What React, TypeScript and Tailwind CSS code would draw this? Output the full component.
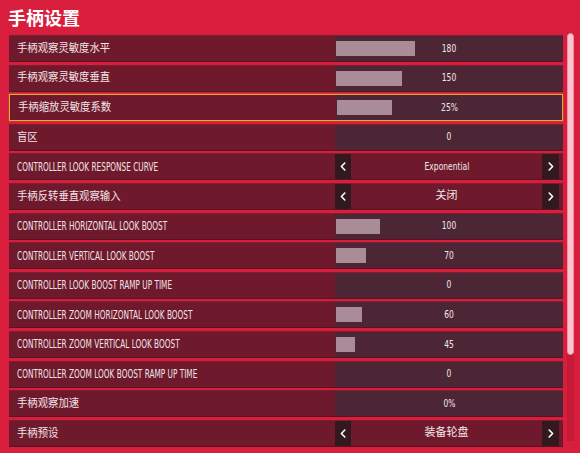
import React from 'react';

type Row = {
  label: string;
  latin?: boolean;
  kind: 'slider' | 'select';
  value: string;
  fill?: number;
  active?: boolean;
};

const rows: Row[] = [
  { label: '手柄观察灵敏度水平', kind: 'slider', value: '180', fill: 79 },
  { label: '手柄观察灵敏度垂直', kind: 'slider', value: '150', fill: 66 },
  { label: '手柄缩放灵敏度系数', kind: 'slider', value: '25%', fill: 55, active: true },
  { label: '盲区', kind: 'slider', value: '0', fill: 0 },
  { label: 'CONTROLLER LOOK RESPONSE CURVE', latin: true, kind: 'select', value: 'Exponential' },
  { label: '手柄反转垂直观察输入', kind: 'select', value: '关闭' },
  { label: 'CONTROLLER HORIZONTAL LOOK BOOST', latin: true, kind: 'slider', value: '100', fill: 44 },
  { label: 'CONTROLLER VERTICAL LOOK BOOST', latin: true, kind: 'slider', value: '70', fill: 30 },
  { label: 'CONTROLLER LOOK BOOST RAMP UP TIME', latin: true, kind: 'slider', value: '0', fill: 0 },
  { label: 'CONTROLLER ZOOM HORIZONTAL LOOK BOOST', latin: true, kind: 'slider', value: '60', fill: 26 },
  { label: 'CONTROLLER ZOOM VERTICAL LOOK BOOST', latin: true, kind: 'slider', value: '45', fill: 19 },
  { label: 'CONTROLLER ZOOM LOOK BOOST RAMP UP TIME', latin: true, kind: 'slider', value: '0', fill: 0 },
  { label: '手柄观察加速', kind: 'slider', value: '0%', fill: 0 },
  { label: '手柄预设', kind: 'select', value: '装备轮盘' },
];

const font = {
  fontFamily: '"DejaVu Sans Condensed", "DejaVu Sans", "Noto Sans CJK SC", sans-serif',
};

function Value({ text }: { text: string }) {
  const latin = /^[A-Za-z0-9%]+$/.test(text);
  return (
    <span
      className={
        latin
          ? 'relative inline-block text-[10.5px] text-[#f3e6ea] scale-x-[0.8]'
          : 'relative inline-block text-[11px] text-[#f3e6ea]'
      }
    >
      {text}
    </span>
  );
}

function Chevron({ dir }: { dir: 'left' | 'right' }) {
  return (
    <svg width="6" height="9" viewBox="0 0 6 9" fill="none">
      <path
        d={dir === 'left' ? 'M4.8 1 L1.4 4.5 L4.8 8' : 'M1.2 1 L4.6 4.5 L1.2 8'}
        stroke="#ffffff"
        strokeWidth="1.6"
        strokeLinecap="round"
        strokeLinejoin="round"
      />
    </svg>
  );
}

function SettingRow({ row }: { row: Row }) {
  return (
    <div
      className={
        row.active
          ? 'flex h-[27px] border border-[#f2a23c] bg-[#6e1a2c] shadow-[0_0_0_1px_#b9402c]'
          : 'flex h-[27px] border-t border-b border-t-[#7c1d31] border-b-[#5a1222] bg-[#6e1a2c]'
      }
    >
      <div className="flex w-[326px] items-center pl-2">
        {row.latin ? (
          <span className="inline-block origin-left whitespace-nowrap text-[12px] text-[#f1e4e8] scale-x-[0.68]">
            {row.label}
          </span>
        ) : (
          <span className="inline-block origin-left whitespace-nowrap text-[11.5px] text-[#f1e4e8] scale-x-[0.9]">
            {row.label}
          </span>
        )}
      </div>
      {row.kind === 'slider' ? (
        <div className="relative flex flex-1 items-center justify-center bg-[#4c2634]">
          <div
            className="absolute left-px top-[5px] h-[15px] bg-[#a98c98]"
            style={{ width: row.fill }}
          />
          <Value text={row.value} />
        </div>
      ) : (
        <div className="flex flex-1 items-center pr-1">
          <div className="flex h-full w-[16px] items-center justify-center bg-[#33181f]">
            <Chevron dir="left" />
          </div>
          <div className="flex flex-1 items-center justify-center">
            <Value text={row.value} />
          </div>
          <div className="flex h-full w-[17px] items-center justify-center bg-[#33181f]">
            <Chevron dir="right" />
          </div>
        </div>
      )}
    </div>
  );
}

export default function App() {
  return (
    <div className="h-[453px] w-[580px] overflow-hidden bg-[#d81e3c]" style={font}>
      <div className="px-2 pt-[3px]">
        <h1
          className="text-[18px] font-bold leading-[28px] text-white"
          style={{ fontFamily: '"Noto Sans CJK SC", sans-serif' }}
        >
          手柄设置
        </h1>
      </div>
      <div className="mt-[4px] flex gap-[4px] pl-[9px]">
        <div className="flex w-[554px] flex-col gap-[2.6px]">
          {rows.map((r) => (
            <SettingRow key={r.label} row={r} />
          ))}
        </div>
        <div className="-mt-[2px] flex h-[408px] w-[7px] flex-col bg-[#c41a36]">
          <div className="h-[322px] w-full rounded-sm border border-[#f18ea2] bg-[#f9c4ce]" />
        </div>
      </div>
    </div>
  );
}
